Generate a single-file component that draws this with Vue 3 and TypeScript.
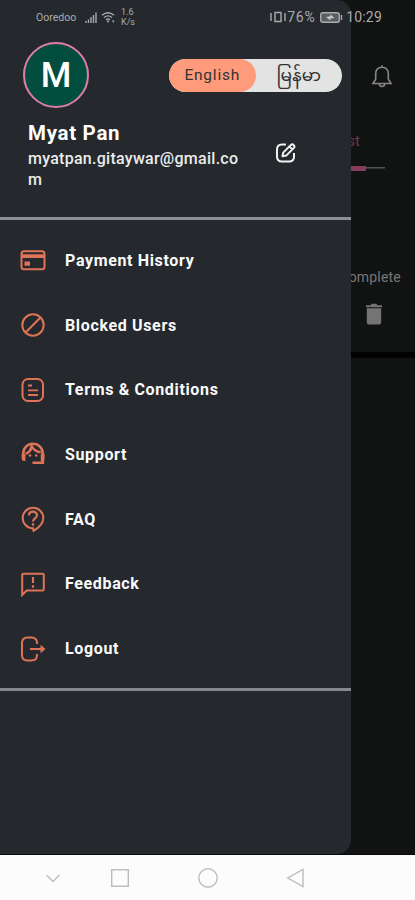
<script setup lang="ts">
import { ref } from 'vue'

type IconName = 'card' | 'block' | 'terms' | 'support' | 'faq' | 'feedback' | 'logout'
interface MenuItem {
  label: string
  icon: IconName
}

const language = ref<'en' | 'my'>('en')
const items: MenuItem[] = [
  { label: 'Payment History', icon: 'card' },
  { label: 'Blocked Users', icon: 'block' },
  { label: 'Terms & Conditions', icon: 'terms' },
  { label: 'Support', icon: 'support' },
  { label: 'FAQ', icon: 'faq' },
  { label: 'Feedback', icon: 'feedback' },
  { label: 'Logout', icon: 'logout' },
]
</script>

<template>
  <div class="phone">
    <main class="screen">
      <section class="page">
        <svg class="bell" viewBox="0 0 24 26" aria-label="Notifications">
          <path d="M12 2.2v2M12 4.2c-4.2 0-6.3 3-6.3 6.8v5.2L3 20.5h18l-2.700-4.300V11c0-3.800-2.100-6.800-6.300-6.800zM9.300 21c.3 3.400 5.100 3.400 5.400 0" />
        </svg>
        <span class="tab">Request</span>
        <div class="track"><div class="track-fill"></div></div>
        <span class="state">Complete</span>
        <svg class="trash" viewBox="0 0 18 22" aria-label="Delete">
          <path d="M1 2.200h4.500L6.700.8h4.600l1.200 1.400H17v2H1zM1.800 5.300h14.400v14.200q0 2-2 2H3.800q-2 0-2-2z" />
        </svg>
        <div class="edge"></div>
      </section>

      <aside class="drawer">
        <header class="profile">
          <div class="top">
            <div class="avatar">M</div>
            <div class="toggle">
              <button :class="['lang', { active: language === 'en' }]" @click="language = 'en'">English</button>
              <button :class="['lang', 'burmese', { active: language === 'my' }]" @click="language = 'my'">မြန်မာ</button>
            </div>
          </div>
          <div class="who">
            <div class="identity">
              <h1>Myat Pan</h1>
              <p>myatpan.gitaywar@gmail.com</p>
            </div>
            <svg class="edit" viewBox="0 0 22 22" aria-label="Edit profile">
              <path d="M11 2.500H7Q2 2.500 2 7.500v7q0 5 5 5h7q5 0 5-5V11" />
              <path d="M7.500 14.300l.7-3.700 7.700-7.700q1.400-1.200 2.800.2 1.400 1.400.2 2.800l-7.700 7.700zM14.400 4.500l2.900 2.900" />
            </svg>
          </div>
        </header>
        <nav class="menu">
          <a v-for="item in items" :key="item.icon" class="item">
            <svg class="icon" viewBox="0 0 26 26">
              <template v-if="item.icon === 'card'">
                <rect x="1.500" y="4.300" width="23" height="18" rx="2.500" />
                <path class="solid" d="M1.500 7.300h23v3.700h-23zM4.500 14.500h5.500v4.300H4.500z" />
              </template>
              <template v-else-if="item.icon === 'block'">
                <circle cx="13" cy="13" r="10.700" />
                <path d="M5.500 20.500l15-15" />
              </template>
              <template v-else-if="item.icon === 'terms'">
                <rect x="2.500" y="2" width="20.500" height="22" rx="5.500" />
                <path class="fine" d="M8 8.500h4M8 13.300h10M8 18h10" />
              </template>
              <template v-else-if="item.icon === 'support'">
                <path class="hair" d="M3.200 17.500v-5a9.800 9.800 0 0 1 19.600 0v9.300H12.500" />
                <path class="solid" d="M1.700 13h3.700v7H4Q1.700 20 1.700 17.500zM20.800 13h3.700v5q0 2-2 2h-1.700z" />
                <path class="hair" d="M5.500 12.800q5-1.500 6.200-7.500 2.500 5.200 9 6" />
                <circle class="solid" cx="10" cy="14.500" r="1.300" />
                <circle class="solid" cx="16.200" cy="14.500" r="1.300" />
              </template>
              <template v-else-if="item.icon === 'faq'">
                <path d="M13 22.300A10.300 10.300 0 1 1 23.300 12c0 5.300-4.500 9.800-9.800 12.800z" />
                <path class="mark" d="M9 9.500c0-5 8-5 8-.3 0 3.200-4 3.300-4 6.300M13 17.300v2.500" />
              </template>
              <template v-else-if="item.icon === 'feedback'">
                <path d="M2.200 24V4q0-1.300 1.300-1.300h19q1.300 0 1.300 1.300v14.200q0 1.300-1.300 1.300H6.700z" />
                <path class="mark" d="M13 6v6M13 14.200v2.500" />
              </template>
              <template v-else>
                <path d="M17 8V7q0-5.500-5.500-5.500H7.500Q2 1.500 2 7v12q0 5.500 5.500 5.500h4q5.500 0 5.500-5.500v-1M10 13h13" />
                <path class="solid" d="M20.500 8.700L25.500 13l-5 4.300z" />
              </template>
            </svg>
            <span>{{ item.label }}</span>
          </a>
        </nav>
      </aside>

      <div class="status">
        <div class="status-left">
          <span class="carrier">Ooredoo</span>
          <svg class="signal" viewBox="0 0 12 11"><path d="M1 11V9M3.500 11V7.500M6 11V5M8.500 11V3M11 11V.5" /></svg>
          <svg class="wifi" viewBox="0 0 15 13">
            <path d="M1 4.200q6-5 12 0M3 6.500q4-3.200 8 0M5 8.700q2-1.600 4 0" />
            <path class="dot" d="M5.500 9.500h3L7 12zM11 9.500h2.500L12.200 12z" />
          </svg>
          <span class="rate">1.6<br />K/s</span>
        </div>
        <div class="status-right">
          <svg class="vibrate" viewBox="0 0 16 12"><path d="M1 2v8M15 2v8M5 1.500h6v9H5z" /></svg>
          <span class="percent">76%</span>
          <svg class="battery" viewBox="0 0 23 11">
            <rect x=".7" y=".7" width="18.600" height="9.600" rx="2" />
            <path class="charge" d="M6 5l4-.7.500-1.800L14.500 6l-4 .5-.5 1.800z" />
            <path d="M21.500 3v5" />
          </svg>
          <span class="clock">10:29</span>
        </div>
      </div>
    </main>

    <footer class="system">
      <svg viewBox="0 0 22 22"><path d="M4.500 8l6.500 6.500L17.500 8" /></svg>
      <svg viewBox="0 0 22 22"><path d="M2.700 2.700h16.600v16.600H2.700z" /></svg>
      <svg viewBox="0 0 22 22"><circle cx="11" cy="11" r="9.200" /></svg>
      <svg viewBox="0 0 22 22"><path d="M18 2.500v17L2.800 11z" /></svg>
    </footer>
  </div>
</template>

<style>
body {
  background: #111;
}
</style>

<style scoped>
.phone {
  display: grid;
  grid-template-rows: 855px 45px;
  height: 900px;
  width: 415px;
  overflow: hidden;
  font-family: Roboto, "Noto Sans", sans-serif;
}
svg {
  display: block;
  flex: none;
  fill: none;
}
.screen {
  position: relative;
  background: #111212;
  overflow: hidden;
  border-bottom: 1px solid #08080a;
  box-sizing: border-box;
}
.page {
  display: flex;
  flex-direction: column;
  align-items: flex-end;
  padding-top: 63px;
}
.bell {
  width: 24px;
  height: 26px;
  margin-right: 21px;
  stroke: #858585;
  stroke-width: 1.6;
}
.tab {
  margin: 42px 55px 0 0;
  font-size: 15px;
  line-height: 20px;
  color: #713949;
}
.track {
  display: flex;
  align-items: center;
  width: 120px;
  height: 6px;
  margin: 14px 30px 0 0;
  background: linear-gradient(#555, #555) center / 100% 1.5px no-repeat;
}
.track-fill {
  width: 101px;
  height: 5px;
  background: #873c5b;
}
.state {
  margin: 96px 14px 0 0;
  font-size: 14px;
  line-height: 20px;
  letter-spacing: 0.2px;
  color: #777;
}
.trash {
  width: 18px;
  height: 22px;
  margin: 16px 32px 0 0;
  fill: #747474;
}
.edge {
  width: 100%;
  height: 6px;
  margin-top: 27px;
  background: #020202;
}
.drawer {
  position: absolute;
  top: 0;
  left: 0;
  width: 351px;
  height: 854px;
  box-sizing: border-box;
  border-radius: 0 14px 14px 0;
  background: #25292d;
}
.profile {
  box-sizing: border-box;
  height: 220px;
  padding-top: 42px;
  border-bottom: 3px solid #8d9196;
}
.top {
  display: flex;
  align-items: center;
  padding: 0 9px 0 23px;
  justify-content: space-between;
}
.avatar {
  box-sizing: border-box;
  width: 66px;
  height: 66px;
  border: 2.5px solid #df7dab;
  border-radius: 50%;
  background: #024d3d;
  color: #fff;
  font-size: 35px;
  font-weight: 500;
  line-height: 64px;
  text-align: center;
}
.toggle {
  display: flex;
  width: 173px;
  height: 33px;
  border-radius: 17px;
  background: #e3e3e3;
  overflow: hidden;
}
.lang {
  width: 87px;
  padding: 0;
  border: 0;
  border-radius: 17px;
  background: none;
  color: #333;
  font: 15.5px/32px Roboto, "Noto Sans Myanmar", "Noto Sans", sans-serif;
  letter-spacing: 0.8px;
}
.burmese {
  font-size: 17px;
  letter-spacing: 0;
}
.active {
  background: #ff9b7b;
}
.who {
  display: flex;
  padding: 12px 0 0 28px;
}
.identity {
  width: 218px;
}
h1 {
  margin: 0;
  color: #fff;
  font-size: 20.5px;
  font-weight: 700;
  line-height: 26px;
  letter-spacing: 0.7px;
}
p {
  margin: 2px 0 0;
  color: #ececec;
  font-size: 16px;
  font-weight: 500;
  line-height: 21px;
  letter-spacing: 0.27px;
  word-break: break-all;
}
.edit {
  width: 22px;
  height: 22px;
  margin: 22px 0 0 29px;
  stroke: #f1f1f1;
  stroke-width: 2;
  stroke-linejoin: round;
}
.menu {
  height: 471px;
  box-sizing: border-box;
  padding: 8px 0 7px;
  display: grid;
  grid-template-rows: repeat(7, 1fr);
  border-bottom: 3px solid #85898c;
}
.item {
  display: flex;
  align-items: center;
  gap: 19px;
  padding-left: 20px;
  color: #fafafa;
  font-size: 16px;
  font-weight: 700;
  line-height: 20px;
  letter-spacing: 0.65px;
}
.item span {
  padding-top: 1px;
}
.icon {
  width: 26px;
  height: 26px;
  stroke: #df7358;
  stroke-width: 2;
}
.icon .solid {
  fill: #df7358;
  stroke: none;
}
.icon .fine {
  stroke-width: 1.8;
}
.icon .hair {
  stroke-width: 2.6;
}
.icon .mark {
  stroke-width: 2.2;
}
.status {
  position: absolute;
  top: 0;
  left: 0;
  width: 415px;
  height: 34px;
  box-sizing: border-box;
  padding: 0 33px 0 36px;
  display: flex;
  justify-content: space-between;
  align-items: center;
  color: #a9abad;
}
.status-left,
.status-right {
  display: flex;
  align-items: center;
}
.status svg {
  stroke: #a9abad;
  stroke-width: 1.4;
}
.carrier {
  width: 40px;
  font-size: 10.5px;
}
.signal {
  width: 12px;
  height: 11px;
  margin-left: 9px;
}
.wifi {
  width: 15px;
  height: 13px;
  margin-left: 4px;
}
.wifi .dot {
  fill: #a9abad;
  stroke: none;
}
.rate {
  margin-left: 5px;
  font-size: 9px;
  line-height: 10px;
}
.vibrate {
  width: 16px;
  height: 12px;
}
.percent {
  width: 30px;
  margin-left: 1px;
  font-size: 14px;
  letter-spacing: 0.8px;
}
.battery {
  width: 23px;
  height: 11px;
  margin-left: 3px;
}
.battery .charge {
  fill: #c5c6c7;
  stroke: none;
}
.battery rect {
  fill: #5b5e61;
}
.clock {
  margin-left: 3px;
  font-size: 14px;
  letter-spacing: 0.2px;
}
.system {
  display: flex;
  align-items: center;
  gap: 66px;
  padding: 1px 0 0 42px;
  background: #fcfcfc;
}
.system svg {
  width: 22px;
  height: 22px;
  stroke: #bdbdbd;
  stroke-width: 1.4;
}
.system svg:first-child {
  margin-right: -21px;
}
</style>
